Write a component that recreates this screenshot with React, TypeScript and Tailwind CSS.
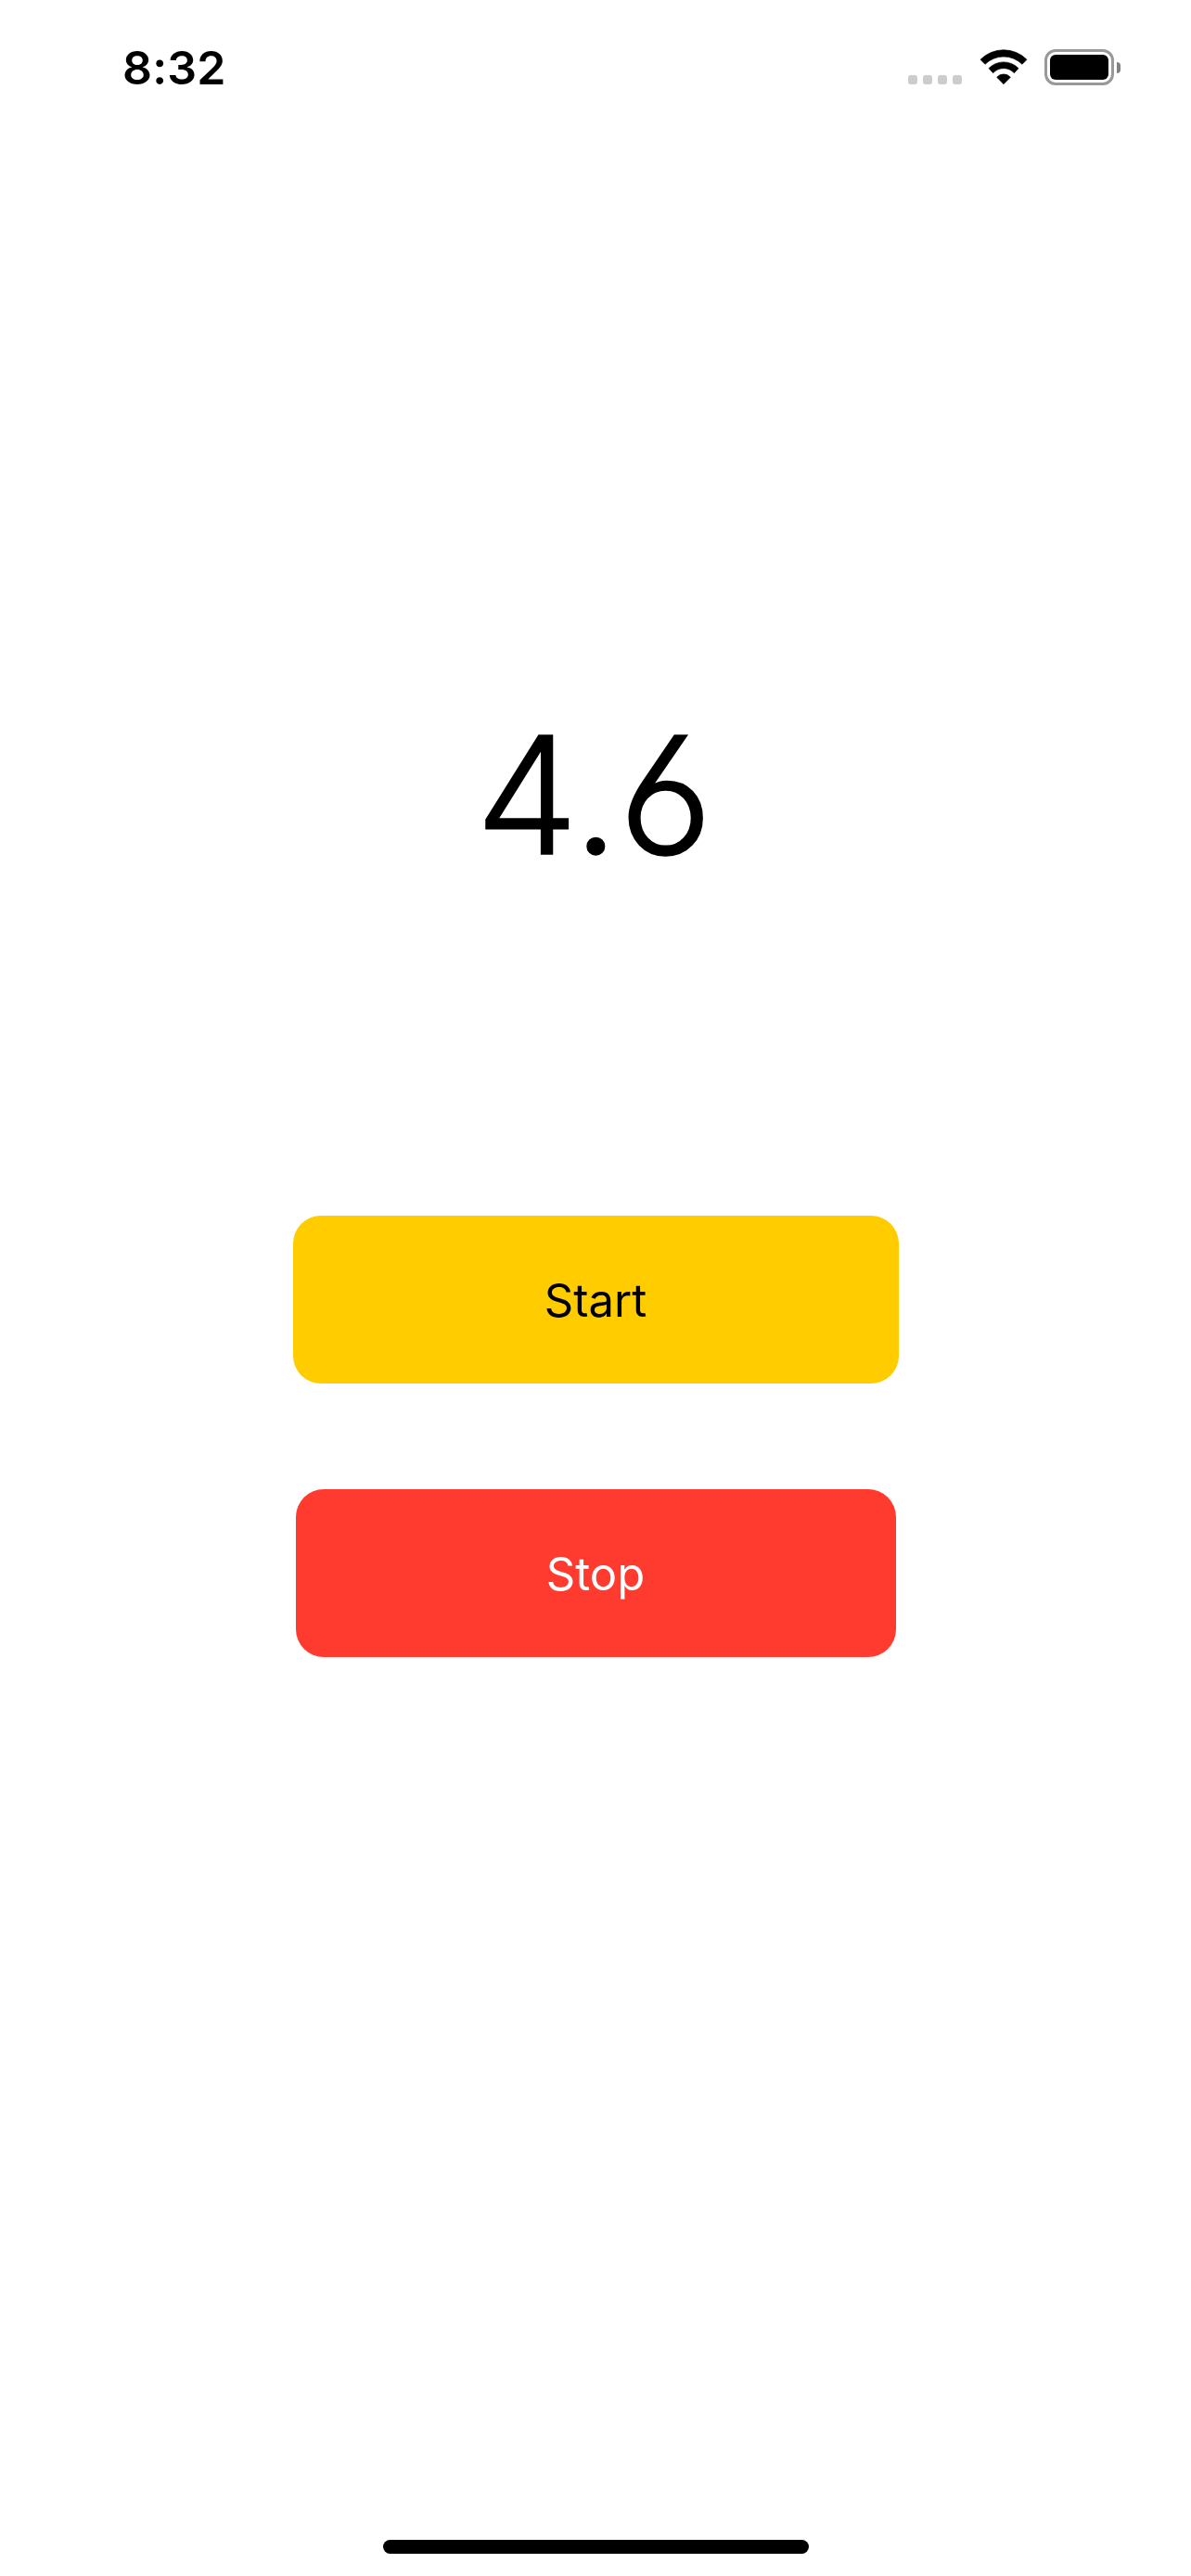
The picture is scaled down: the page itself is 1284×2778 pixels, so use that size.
function CellularDots() {
  return (
    <div className="flex gap-1.5">
      {[0, 1, 2, 3].map((dot) => (
        <span key={dot} className="size-2.5 rounded-[3px] bg-[#cccccc]" />
      ))}
    </div>
  );
}

function WifiIcon() {
  return (
    <svg className="h-[38px] w-[52px]" viewBox="257 39 156 114" strokeLinejoin="round" stroke="#000" strokeWidth="2">
      <path d="M260 73A105 105 0 0 1 410 73L395 88A85 85 0 0 0 275 88Z" />
      <path d="M287 101A67 67 0 0 1 383 101L369 116A46 46 0 0 0 301 116Z" />
      <path d="M313 130A29 29 0 0 1 357 130L335 152Z" />
    </svg>
  );
}

function BatteryIcon() {
  return (
    <div className="flex items-center gap-[3px]">
      <div className="h-[39px] w-[75px] rounded-[12px] border-3 border-[#999999] p-[3px]">
        <div className="h-full rounded-[6px] bg-black" />
      </div>
      <div className="h-3 w-1 rounded-r-full bg-[#808080]" />
    </div>
  );
}

function StatusBar() {
  return (
    <header className="flex h-[145px] items-start justify-between pt-[53px] pr-[76px] pl-[132px]">
      <time className="-mt-[5px] text-[50px] leading-[51px] font-semibold tracking-[0.2px]">8:32</time>
      <div className="flex h-[39px] items-end">
        <div className="mr-[19px] mb-px">
          <CellularDots />
        </div>
        <div className="mr-[18px] mb-px">
          <WifiIcon />
        </div>
        <BatteryIcon />
      </div>
    </header>
  );
}

export default function App() {
  return (
    <div className="flex h-[2778px] w-[1284px] flex-col bg-white font-['Inter',sans-serif] text-black">
      <StatusBar />
      <main className="flex flex-1 flex-col items-center">
        <div className="mt-[604px] mr-[3px] h-[216px] text-[176px] leading-[216px] font-light [-webkit-text-stroke:1.5px_#000] [font-feature-settings:'cv03']">
          4.6
        </div>
        <button className="mt-[346px] h-[181px] w-[653px] rounded-[30px] bg-[#ffcc00] pt-0.5 text-[49px] leading-none">
          Start
        </button>
        <button className="mt-[114px] h-[181px] w-[647px] rounded-[30px] bg-[#ff3b30] pt-0.5 text-[49px] leading-none text-white">
          Stop
        </button>
      </main>
      <footer className="flex justify-center pb-6">
        <div className="h-[15px] w-[459px] rounded-full bg-black" />
      </footer>
    </div>
  );
}
